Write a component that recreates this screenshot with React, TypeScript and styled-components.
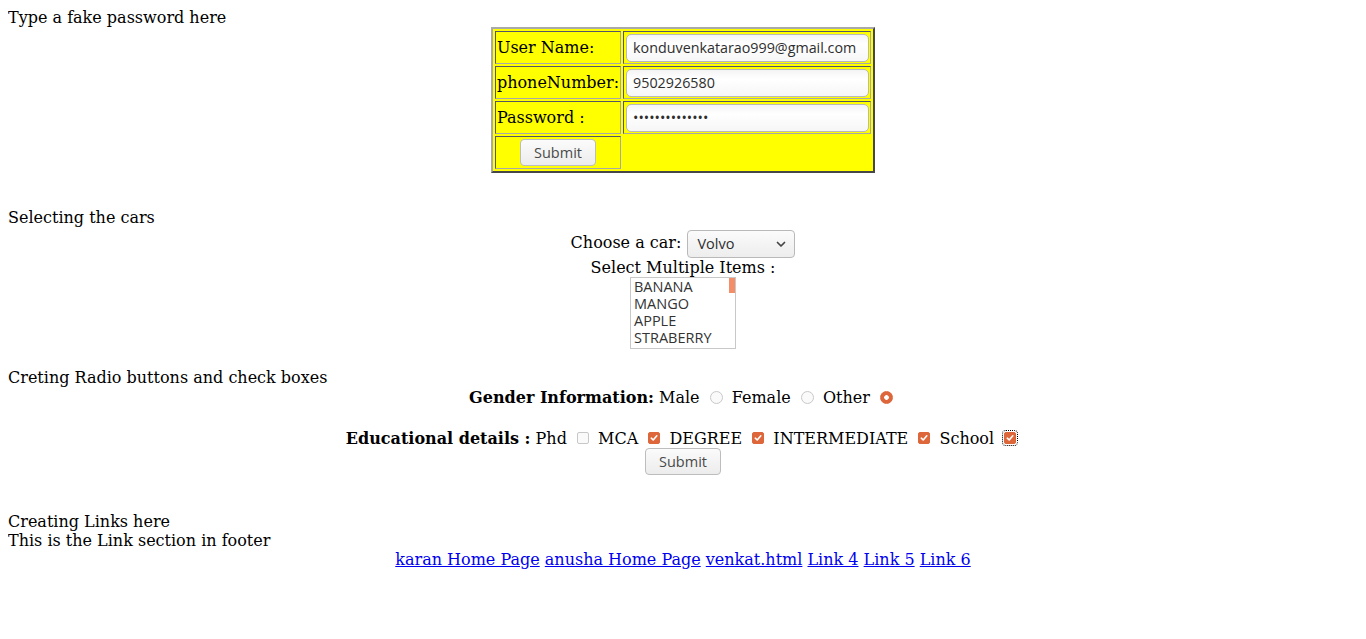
import React from "react";
import styled, { createGlobalStyle } from "styled-components";

const GlobalStyle = createGlobalStyle`
  html, body { background: #fff; }
  body {
    margin: 8px;
    font-family: "DejaVu Serif", serif;
    font-size: 16px;
    color: #000;
  }
`;

const ctrlFont = `"Open Sans", "Noto Sans", sans-serif`;
const accent = "#dd673a";

const Page = styled.div`
  display: flex;
  flex-direction: column;
`;

const Line = styled.div<{ $top?: number }>`
  line-height: 19px;
  height: 19px;
  margin-top: ${(p) => p.$top ?? 0}px;
  white-space: nowrap;
`;

const CenterRow = styled.div<{ $top?: number; $h?: number }>`
  display: block;
  text-align: center;
  margin-top: ${(p) => p.$top ?? 0}px;
  height: ${(p) => (p.$h ? `${p.$h}px` : "auto")};
  line-height: ${(p) => (p.$h ? `${p.$h}px` : "19px")};
  white-space: nowrap;
`;

const FormTable = styled.table`
  margin: 0 auto;
  background: #ffff00;
  border-collapse: separate;
  border-spacing: 2px;
  border-width: 2px;
  border-style: solid;
  border-color: #a9a9a9 #474747 #474747 #a9a9a9;
`;

const Cell = styled.td<{ $center?: boolean }>`
  padding: 1px;
  height: 29px;
  border-width: 1px;
  border-style: solid;
  border-color: #55556a #a8a8a8 #a8a8a8 #55556a;
  text-align: ${(p) => (p.$center ? "center" : "left")};
  vertical-align: middle;
  white-space: nowrap;
  line-height: 19px;
`;

const TextInput = styled.input`
  box-sizing: border-box;
  display: block;
  width: 243px;
  height: 28px;
  margin: 0 0 0 1px;
  padding: 0 6px;
  border: 1px solid #b9b9b9;
  border-radius: 5px;
  background: linear-gradient(#f4f4f4, #ffffff 35%, #f6f6f6);
  font-family: ${ctrlFont};
  font-size: 14.3px;
  color: #2e2e2e;
  outline: none;
`;

const Button = styled.button`
  box-sizing: border-box;
  width: 76px;
  height: 27px;
  padding: 0;
  border: 1px solid #bdbdbd;
  border-radius: 4px;
  background: linear-gradient(#fbfbfb, #ececec);
  font-family: ${ctrlFont};
  font-size: 14.5px;
  line-height: 25px;
  color: #4a4a4a;
  cursor: pointer;
  vertical-align: top;
`;

const SelectWrap = styled.span`
  position: relative;
  display: inline-block;
  vertical-align: middle;
  margin-left: 1px;
  height: 28px;
`;

const CarSelect = styled.select`
  appearance: none;
  -webkit-appearance: none;
  box-sizing: border-box;
  display: block;
  width: 108px;
  height: 28px;
  padding: 0 0 0 9px;
  border: 1px solid #b9b9b9;
  border-radius: 4px;
  background: linear-gradient(#fbfbfb, #ededed);
  font-family: ${ctrlFont};
  font-size: 14.5px;
  color: #2e2e2e;
`;

const Chevron = styled.svg`
  position: absolute;
  right: 9px;
  top: 11px;
  pointer-events: none;
`;

const ListBox = styled.div`
  position: relative;
  display: inline-block;
  vertical-align: top;
  box-sizing: border-box;
  width: 106px;
  height: 72px;
  border: 1px solid #c8c8c8;
  padding: 0 0 0 3px;
  overflow: hidden;
  background: #fff;
  text-align: left;
`;

const ListItem = styled.div`
  font-family: ${ctrlFont};
  font-size: 14.5px;
  line-height: 17px;
  height: 17px;
  color: #333;
`;

const ScrollThumb = styled.div`
  position: absolute;
  right: 0;
  top: 0;
  width: 6px;
  height: 15px;
  background: #f38e68;
`;

const Bold = styled.b`
  font-weight: bold;
`;

const RadioDot = styled.span<{ $checked?: boolean }>`
  box-sizing: border-box;
  display: inline-block;
  vertical-align: middle;
  width: 13px;
  height: 13px;
  margin: -3px 4px 0 5px;
  border-radius: 50%;
  border: 1px solid ${(p) => (p.$checked ? accent : "#c8c8c8")};
  background: ${(p) =>
    p.$checked
      ? `radial-gradient(circle, #fff 0 2px, ${accent} 2.6px)`
      : "#fafafa"};
`;

const CheckBox = styled.span<{ $checked?: boolean; $focused?: boolean }>`
  box-sizing: border-box;
  display: inline-flex;
  align-items: center;
  justify-content: center;
  vertical-align: middle;
  width: 12px;
  height: 12px;
  margin: -3px 4px 0 5px;
  border-radius: 2px;
  border: 1px solid ${(p) => (p.$checked ? accent : "#c8c8c8")};
  background: ${(p) => (p.$checked ? accent : "#fafafa")};
  outline: ${(p) => (p.$focused ? "1px dotted #000" : "none")};
  outline-offset: 1px;
`;

const Link = styled.a`
  color: #0000ee;
  text-decoration: underline;
`;

const Check = () => (
  <svg width="8" height="8" viewBox="0 0 8 8">
    <path d="M1.3 4.2 L3.2 6 L6.8 1.8" fill="none" stroke="#fff" strokeWidth="1.6" strokeLinecap="round" strokeLinejoin="round" />
  </svg>
);

export default function App() {
  return (
    <>
      <GlobalStyle />
      <Page>
        <Line>Type a fake password here</Line>
        <FormTable>
          <tbody>
            <tr>
              <Cell>User Name:</Cell>
              <Cell>
                <TextInput type="text" defaultValue="konduvenkatarao999@gmail.com" />
              </Cell>
            </tr>
            <tr>
              <Cell>phoneNumber:</Cell>
              <Cell>
                <TextInput type="text" defaultValue="9502926580" />
              </Cell>
            </tr>
            <tr>
              <Cell>Password :</Cell>
              <Cell>
                <TextInput type="password" defaultValue="venkatarao1234" />
              </Cell>
            </tr>
            <tr>
              <Cell $center>
                <Button type="button">Submit</Button>
              </Cell>
            </tr>
          </tbody>
        </FormTable>

        <Line $top={35}>Selecting the cars</Line>
        <CenterRow $h={31}>
          Choose a car:{" "}
          <SelectWrap>
            <CarSelect defaultValue="volvo">
              <option value="volvo">Volvo</option>
              <option value="saab">Saab</option>
              <option value="mercedes">Mercedes</option>
              <option value="audi">Audi</option>
            </CarSelect>
            <Chevron width="10" height="7" viewBox="0 0 10 7">
              <path d="M1.5 1.5 L5 5 L8.5 1.5" fill="none" stroke="#444" strokeWidth="1.7" strokeLinecap="round" strokeLinejoin="round" />
            </Chevron>
          </SelectWrap>
        </CenterRow>
        <CenterRow>Select Multiple Items :</CenterRow>
        <CenterRow $h={72}>
          <ListBox role="listbox" aria-multiselectable="true">
            <ListItem>BANANA</ListItem>
            <ListItem>MANGO</ListItem>
            <ListItem>APPLE</ListItem>
            <ListItem>STRABERRY</ListItem>
            <ScrollThumb />
          </ListBox>
        </CenterRow>

        <Line $top={19}>Creting Radio buttons and check boxes</Line>
        <CenterRow $top={1} $h={20}>
          <Bold>Gender Information:</Bold> Male <RadioDot /> Female <RadioDot /> Other <RadioDot $checked />
        </CenterRow>
        <CenterRow $top={21} $h={20}>
          <Bold>Educational details :</Bold> Phd <CheckBox /> MCA <CheckBox $checked><Check /></CheckBox> DEGREE <CheckBox $checked><Check /></CheckBox> INTERMEDIATE <CheckBox $checked><Check /></CheckBox> School <CheckBox $checked $focused><Check /></CheckBox>
        </CenterRow>
        <CenterRow $top={-1} $h={27}>
          <Button type="button">Submit</Button>
        </CenterRow>

        <Line $top={37}>Creating Links here</Line>
        <Line>This is the Link section in footer</Line>
        <CenterRow>
          <Link href="#karan">karan Home Page</Link>{" "}
          <Link href="#anusha">anusha Home Page</Link>{" "}
          <Link href="#venkat">venkat.html</Link>{" "}
          <Link href="#4">Link 4</Link>{" "}
          <Link href="#5">Link 5</Link>{" "}
          <Link href="#6">Link 6</Link>
        </CenterRow>
      </Page>
    </>
  );
}
